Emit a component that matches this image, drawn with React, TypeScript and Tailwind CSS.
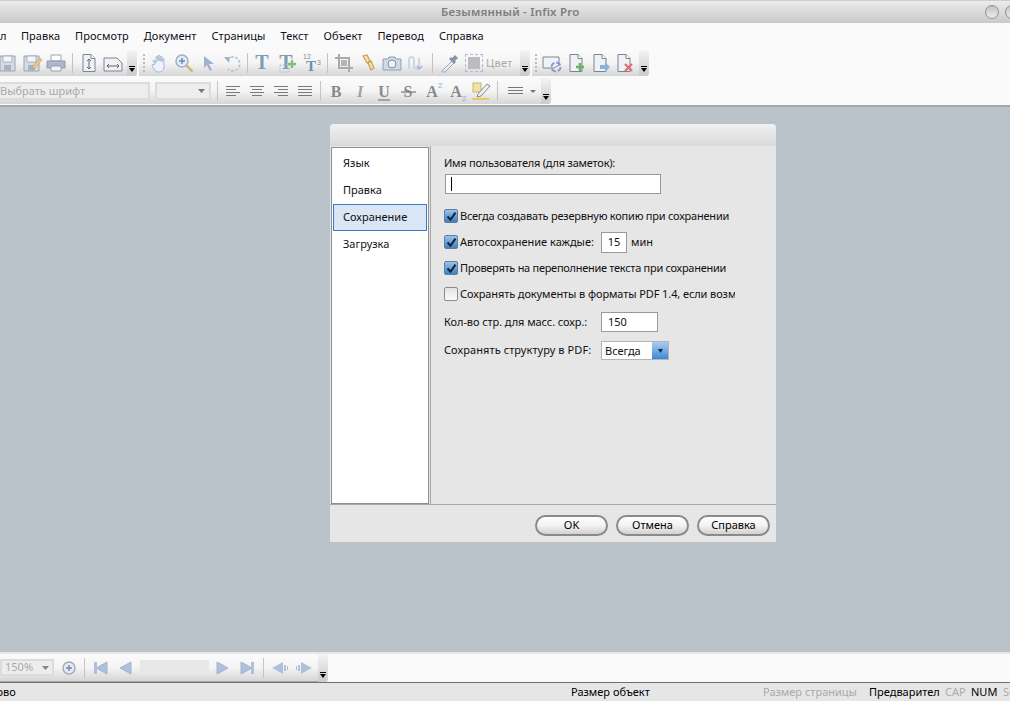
import type { ReactNode } from "react";

const font = { fontFamily: '"Noto Sans", "Liberation Sans", sans-serif' };

function Tb({ w = 24, children }: { w?: number; children?: ReactNode }) {
  return (
    <div className="flex h-full shrink-0 items-center justify-center" style={{ width: w }}>
      <svg width="22" height="22" viewBox="0 0 22 22" fill="none">
        {children}
      </svg>
    </div>
  );
}

function Sep({ wide }: { wide?: boolean }) {
  return <div className={`${wide ? "mx-[4px]" : "mx-[3px]"} h-[20px] w-px shrink-0 bg-[#c4c4c4]`} />;
}

function Dots() {
  return (
    <div className="flex w-[8px] shrink-0 flex-col items-center gap-[2px]">
      <i className="h-[2px] w-[2px] bg-[#bbb]" />
      <i className="h-[2px] w-[2px] bg-[#bbb]" />
      <i className="h-[2px] w-[2px] bg-[#bbb]" />
      <i className="h-[2px] w-[2px] bg-[#bbb]" />
      <i className="h-[2px] w-[2px] bg-[#bbb]" />
    </div>
  );
}

function Handle() {
  return (
    <div className="flex h-full w-[10px] shrink-0 flex-col items-center justify-end rounded-r-[3px] bg-gradient-to-b from-[#f4f4f4] to-[#cacaca] pb-[4px]">
      <i className="mb-[1px] h-[1px] w-[6px] bg-black" />
      <svg width="6" height="4" viewBox="0 0 6 4">
        <path d="M0 0h6L3 4z" fill="#000" />
      </svg>
    </div>
  );
}

const barBg = "bg-gradient-to-b from-[#fbfbfb] via-[#f4f4f4] to-[#d6d6d6]";

function Page({ children }: { children?: ReactNode }) {
  return (
    <>
      <path d="M5 2.5h8l4 4v13H5z" fill="#eef1f5" stroke="#7d8590" />
      <path d="M13 2.5v4h4" fill="#fff" stroke="#7d8590" />
      {children}
    </>
  );
}

function Floppy() {
  return (
    <>
      <path d="M3 4h15v15H3z" fill="#d5dbe6" stroke="#9aa3b3" />
      <path d="M6 4h9v6H6z" fill="#f6f6f6" stroke="#aab1bd" />
      <path d="M7 13h7v6H7z" fill="#a9b2c2" />
    </>
  );
}

function AlignLines({ kind }: { kind: "l" | "c" | "r" | "j" }) {
  const rows = [14, 10, 14, 10];
  return (
    <Tb>
      {rows.map((len, i) => {
        const w = kind === "j" ? 14 : len;
        const x = kind === "l" || kind === "j" ? 4 : kind === "c" ? 11 - w / 2 : 18 - w;
        return <rect key={i} x={x} y={6 + i * 3} width={w} height="1" fill="#7a7a7a" />;
      })}
    </Tb>
  );
}

function Letter({
  ch,
  color = "#85898e",
  size = 16,
  italic,
  extra,
}: {
  ch: string;
  color?: string;
  size?: number;
  italic?: boolean;
  extra?: ReactNode;
}) {
  return (
    <Tb>
      <text
        x="10"
        y="17"
        textAnchor="middle"
        fontSize={size}
        fontWeight="700"
        fontStyle={italic ? "italic" : "normal"}
        fill={color}
        fontFamily='"Liberation Serif", serif'
      >
        {ch}
      </text>
      {extra}
    </Tb>
  );
}

function Check({ on }: { on: boolean }) {
  return (
    <span
      className={`flex h-[14px] w-[14px] shrink-0 items-center justify-center rounded-[2px] border ${
        on ? "border-[#5b7fa6] bg-gradient-to-b from-[#9cc3ea] to-[#3f7fc0]" : "border-[#8c8c8c] bg-gradient-to-b from-[#e4e4e4] to-[#fafafa]"
      }`}
    >
      {on && (
        <svg width="11" height="11" viewBox="0 0 11 11">
          <path d="M1.5 5.5l3 3.2 5-7" fill="none" stroke="#10233c" strokeWidth="2" />
        </svg>
      )}
    </span>
  );
}

function Btn({ label }: { label: string }) {
  return (
    <div className="flex h-[21px] w-[73px] items-center justify-center rounded-full border-2 border-[#8a8a8a] bg-gradient-to-b from-[#ffffff] via-[#f2f2f2] to-[#d2d2d2] text-black">
      {label}
    </div>
  );
}

function Tri({ dir, bar }: { dir: "l" | "r"; bar?: boolean }) {
  return (
    <Tb>
      {dir === "l" ? <path d="M17 5v12L6 11z" fill="#b0c0dc" stroke="#a3b4d0" /> : <path d="M5 5v12l11-6z" fill="#b0c0dc" stroke="#a3b4d0" />}
      {bar && <rect x={dir === "l" ? 4 : 15} y="5" width="3" height="12" fill="#b0c0dc" />}
    </Tb>
  );
}

export default function App() {
  return (
    <div className="flex h-[701px] w-[1010px] flex-col overflow-hidden bg-[#bac2ca] text-[11px] text-[#111]" style={font}>
      {/* title */}
      <div className="flex h-[23px] shrink-0 items-center border-t border-[#cfcfcf] bg-gradient-to-b from-[#ececec] to-[#c9c9c9] pl-[441px]">
        <span className="text-[11.5px] font-semibold tracking-[0.2px] text-[#7e7e7e]">Безымянный - Infix Pro</span>
        <div className="ml-auto mr-[-9px] flex gap-[6px]">
          <i className="h-[14px] w-[14px] rounded-full border border-[#8f8f8f] bg-gradient-to-b from-[#c4c4c4] to-[#ececec]" />
          <i className="h-[14px] w-[14px] rounded-full border border-[#8f8f8f] bg-gradient-to-b from-[#c4c4c4] to-[#ececec]" />
        </div>
      </div>

      {/* menu */}
      <div className="flex h-[27px] shrink-0 items-center gap-[15px] bg-[#fafafa] tracking-[0.04px] text-[#101020]">
        <span className="ml-[-22px] w-[28px] whitespace-nowrap">Файл</span>
        <span>Правка</span>
        <span>Просмотр</span>
        <span>Документ</span>
        <span>Страницы</span>
        <span>Текст</span>
        <span>Объект</span>
        <span>Перевод</span>
        <span>Справка</span>
      </div>

      {/* toolbars */}
      <div className="flex h-[57px] shrink-0 flex-col gap-[2px] border-b-2 border-[#a6a6a6] bg-[#fafafa]">
        <div className="flex h-[26px] items-center">
          <div className={`ml-[-4px] flex h-full items-center pr-[2px] ${barBg}`}>
            <Tb><Floppy /></Tb>
            <Tb><Floppy /><path d="M12 14l7-8 2 2-7 8-3 1z" fill="#e8c98a" stroke="#b89a5f" strokeWidth=".6" /></Tb>
            <Tb>
              <path d="M6 3h10v6H6z" fill="#fff" stroke="#9aa3b3" />
              <path d="M2 9h18v7H2z" fill="#aeb8c8" stroke="#929cad" />
              <path d="M6 14h10v5H6z" fill="#f4f4f4" stroke="#9aa3b3" />
            </Tb>
            <Sep wide />
            <Tb><Page><path d="M11 7v10M9 9l2-2 2 2M9 15l2 2 2-2" stroke="#666" fill="none" /></Page></Tb>
            <Tb>
              <path d="M2 6h13l5 5v8H2z" fill="#eef1f5" stroke="#7d8590" />
              <path d="M5 14h12M7 12l-2 2 2 2M15 12l2 2-2 2" stroke="#666" fill="none" />
            </Tb>
          </div>
          <Handle />
          <div className={`ml-[2px] flex h-full items-center pl-[1px] ${barBg}`}>
            <Dots />
            <Tb>
              <path d="M6 12L4 9c0-1 1-1 2 0l1 2V5c0-1 2-1 2 0v4-5c0-1 2-1 2 0v5-4c0-1 2-1 2 0v5-3c0-1 2-1 2 0v8c0 3-2 5-5 5-4 0-5-3-7-7z" fill="#eef3fb" stroke="#9fb0ca" strokeWidth=".9" />
            </Tb>
            <Tb>
              <circle cx="9" cy="9" r="6" fill="#e6ecf5" stroke="#9fb0ca" strokeWidth="1.5" />
              <path d="M6 9h6M9 6v6" stroke="#7089b8" strokeWidth="1.5" />
              <path d="M13.5 13.5l6 6" stroke="#d3b67e" strokeWidth="2.5" />
            </Tb>
            <Tb><path d="M7 4l10 8h-5l3 6-2 1-3-6-3 3z" fill="#9db2cf" /></Tb>
            <Tb>
              <path d="M6 8a7 7 0 1 1 1 9" fill="none" stroke="#b6c2d5" strokeWidth="1.6" strokeDasharray="3 1.5" />
              <path d="M3 5l6 0-1 6z" fill="#9db2cf" />
            </Tb>
            <Sep />
            <Letter ch="T" color="#7f9db0" size={20} />
            <Letter
              ch="T"
              color="#7f9db0"
              size={20}
              extra={
                <>
                  <rect x="4" y="13" width="9" height="7" fill="none" stroke="#a9bbd3" strokeDasharray="1.5 1.5" />
                  <path d="M16 8v8M12 12h8" stroke="#7cc07a" strokeWidth="2.4" />
                </>
              }
            />
            <Tb>
              <text x="11" y="19" textAnchor="middle" fontSize="15" fontWeight="700" fill="#6f8eb4" fontFamily='"Liberation Serif", serif'>T</text>
              <text x="3" y="7" fontSize="7" fill="#888" fontFamily="sans-serif">12</text>
              <text x="17" y="13" fontSize="7" fill="#888" fontFamily="sans-serif">3</text>
            </Tb>
            <Sep wide />
            <Tb>
              <path d="M6 2v14h14M2 6h14v14" fill="none" stroke="#aaa" strokeWidth="2" />
              <rect x="8" y="8" width="6" height="6" fill="#b5b5b5" />
            </Tb>
            <Tb>
              <path d="M6 4l4-1 3 6-3 2zM11 11l3-2 3 7-3 2z" fill="#f5e0ae" stroke="#c4a05c" strokeWidth="1.2" />
            </Tb>
            <Tb>
              <path d="M2 7h5l1-2h6l1 2h5v11H2z" fill="#cfd9e8" stroke="#8f9fb5" />
              <circle cx="11" cy="12" r="4" fill="#eef1f6" stroke="#808c9d" />
            </Tb>
            <Tb>
              <path d="M4 17V8c0-4 5-4 5 0v6c0 4 5 4 5 0V6" fill="none" stroke="#ccd6e5" strokeWidth="2" />
              <path d="M12 14l2 3 3-3" fill="none" stroke="#9db2cf" strokeWidth="1.4" />
            </Tb>
            <Sep wide />
            <Tb w={26}>
              <path d="M4 18l9-9 2 2-9 9-3 0z" fill="#eaf0f8" stroke="#94a6bf" />
              <path d="M13 6l3-3 3 3-3 3 1 1-2 2-5-5 2-2z" fill="#8a94a3" />
            </Tb>
            <div className="ml-[2px] flex h-[18px] w-[18px] shrink-0 items-center justify-center border border-dashed border-[#a9bde0]">
              <i className="h-[12px] w-[12px] bg-[#bcbcbc]" />
            </div>
            <span className="ml-[3px] w-[34px] shrink-0 tracking-[0.3px] text-[#a9a9a9]">Цвет</span>
          </div>
          <Handle />
          <div className={`ml-[2px] flex h-full items-center pr-[3px] ${barBg}`}>
            <Dots />
            <Tb>
              <path d="M2 5h16v8l-5 3H2z" fill="#f0f3f7" stroke="#7d8590" />
              <circle cx="15" cy="15" r="4.5" fill="none" stroke="#8a95cf" strokeWidth="1.8" strokeDasharray="5 2" />
            </Tb>
            <Tb><Page><path d="M15 11v8M11 15h8" stroke="#68b368" strokeWidth="2.6" /></Page></Tb>
            <Tb><Page><path d="M11 13h5v-3l5 5-5 5v-3h-5z" fill="#8ab0da" /></Page></Tb>
            <Tb><Page><path d="M12 12l7 7M19 12l-7 7" stroke="#de6e70" strokeWidth="2.2" /></Page></Tb>
          </div>
          <Handle />
        </div>

        <div className="flex h-[26px] items-center">
          <div className={`flex h-full items-center ${barBg}`}>
            <div className="ml-[-8px] flex h-[18px] w-[158px] items-center border-2 border-[#dcdcdc] bg-[#ededed] pl-[6px] pt-[1px] text-[#a9a9a9]">
              Выбрать шрифт
            </div>
            <div className="ml-[5px] flex h-[18px] w-[56px] items-center justify-end border-2 border-[#dcdcdc] bg-[#ededed] pr-[4px]">
              <svg width="7" height="4" viewBox="0 0 7 4"><path d="M0 0h7L3.5 4z" fill="#777" /></svg>
            </div>
            <div className="ml-[3px]"><Sep /></div>
            <AlignLines kind="l" />
            <AlignLines kind="c" />
            <AlignLines kind="r" />
            <AlignLines kind="j" />
            <Sep />
            <div className="w-[1px] shrink-0" />
            <Letter ch="B" />
            <Letter ch="I" color="#a0a0a0" italic />
            <Letter ch="U" extra={<path d="M4 20h12" stroke="#85898e" strokeWidth="1.4" />} />
            <Letter ch="S" extra={<path d="M3 12h15" stroke="#85898e" strokeWidth="1.4" />} />
            <Letter ch="A" extra={<text x="16" y="8" fontSize="8" fill="#8aaee0" fontFamily="sans-serif">2</text>} />
            <Letter ch="A" extra={<text x="16" y="21" fontSize="8" fill="#8aaee0" fontFamily="sans-serif">2</text>} />
            <Tb>
              <rect x="3" y="3" width="8" height="9" fill="#f2e2a6" stroke="#c7b36a" />
              <path d="M8 14l9-10 3 2-9 10-4 1z" fill="#eef1f5" stroke="#888" />
              <rect x="2" y="18" width="17" height="2" fill="#f0c85a" />
            </Tb>
            <Sep wide />
            <div className="w-[2px] shrink-0" />
            <Tb>
              <rect x="3" y="7" width="15" height="1" fill="#777" />
              <rect x="3" y="10" width="15" height="1" fill="#777" />
              <rect x="3" y="13" width="15" height="1" fill="#777" />
            </Tb>
            <div className="flex w-[9px] shrink-0 items-center justify-center">
              <svg width="6" height="3" viewBox="0 0 6 3"><path d="M0 0h6L3 3z" fill="#777" /></svg>
            </div>
            <div className="w-[4px] shrink-0" />
          </div>
          <Handle />
        </div>
      </div>

      {/* workspace */}
      <div className="min-h-0 flex-1 pl-[330px] pt-[17px]">
        <div className="flex h-[418px] w-[446px] flex-col overflow-hidden rounded-t-[4px] bg-[#e6e6e6]">
          <div className="h-[22px] shrink-0 bg-gradient-to-b from-[#f1f1f1] to-[#d9d9d9]" />
          <div className="flex h-[359px] shrink-0 border-b border-[#a8a8a8]">
            <div className="ml-[1px] mt-[1px] w-[98px] shrink-0 border border-[#8f8f8f] bg-white p-[1px]">
              <div className="flex h-[28px] items-center pl-[10px] pt-[1px]">Язык</div>
              <div className="flex h-[27px] items-center pl-[10px]">Правка</div>
              <div className="flex h-[27px] items-center border border-[#3d79c4] bg-[#d9e6f6] pl-[9px]">Сохранение</div>
              <div className="flex h-[27px] items-center pl-[10px]">Загрузка</div>
            </div>
            <div className="ml-[1px] flex-1 border-l border-[#a8a8a8] pl-[13px]">
              <div className="flex h-[28px] items-end pb-[3px] tracking-[-0.22px]">Имя пользователя (для заметок):</div>
              <div className="ml-[1px] flex h-[20px] w-[216px] items-center border border-[#9a9a9a] bg-white pl-[5px]">
                <i className="h-[14px] w-px bg-black" />
              </div>
              <div className="mt-[9px]">
                <div className="flex h-[26px] items-center">
                  <Check on />
                  <span className="ml-[2px] w-[275px] overflow-hidden whitespace-nowrap tracking-[-0.22px]">Всегда создавать резервную копию при сохранении</span>
                </div>
                <div className="flex h-[26px] items-center">
                  <Check on />
                  <span className="ml-[2px] w-[141px] whitespace-nowrap">Автосохранение каждые:</span>
                  <div className="flex h-[21px] w-[26px] items-center justify-center border border-[#9a9a9a] bg-white">15</div>
                  <span className="ml-[4px]">мин</span>
                </div>
                <div className="flex h-[26px] items-center">
                  <Check on />
                  <span className="ml-[2px] w-[275px] overflow-hidden whitespace-nowrap tracking-[-0.28px]">Проверять на переполнение текста при сохранении</span>
                </div>
                <div className="flex h-[26px] items-center">
                  <Check on={false} />
                  <span className="ml-[2px] w-[275px] overflow-hidden whitespace-nowrap tracking-[-0.1px]">Сохранять документы в форматы PDF 1.4, если возможно</span>
                </div>
              </div>
              <div className="mt-[5px] flex h-[20px] items-center">
                <span className="w-[157px] whitespace-nowrap tracking-[-0.08px]">Кол-во стр. для масс. сохр.:</span>
                <div className="flex h-[20px] w-[57px] items-center border border-[#9a9a9a] bg-white pl-[6px]">150</div>
              </div>
              <div className="mt-[9px] flex h-[19px] items-center">
                <span className="w-[157px] whitespace-nowrap tracking-[0.08px]">Сохранять структуру в PDF:</span>
                <div className="flex h-[19px] w-[68px] items-stretch border border-[#b5b5b5] bg-white pl-[3px]">
                  <span className="flex-1 leading-[17px]">Всегда</span>
                  <span className="flex w-[16px] items-center justify-center bg-gradient-to-b from-[#a9cdf2] to-[#3f86d6]">
                    <svg width="5" height="4" viewBox="0 0 5 4"><path d="M0 0h5L2.5 4z" fill="#102a50" /></svg>
                  </span>
                </div>
              </div>
            </div>
          </div>
          <div className="flex flex-1 items-center justify-end gap-[8px] pr-[6px] pt-[3px]">
            <Btn label="OK" />
            <Btn label="Отмена" />
            <Btn label="Справка" />
          </div>
        </div>
      </div>

      {/* bottom nav */}
      <div className="flex h-[30px] shrink-0 items-stretch border-t-2 border-[#e8e8e8] bg-[#fafafa]">
        <div className={`flex items-center pr-[2px] ${barBg} border-b border-[#a6a6a6]`}>
          <div className="flex h-[17px] w-[54px] items-center justify-between border-2 border-[#dcdcdc] bg-[#ededed] pl-[3px] pr-[3px] text-[#a9a9a9]">
            <span>150%</span>
            <svg width="7" height="4" viewBox="0 0 7 4"><path d="M0 0h7L3.5 4z" fill="#888" /></svg>
          </div>
          <div className="ml-[3px]">
            <Tb>
              <circle cx="11" cy="11" r="6" fill="#e4e9f2" stroke="#a0aabb" strokeWidth="1.4" />
              <path d="M8 11h6M11 8v6" stroke="#7186b3" strokeWidth="1.4" />
            </Tb>
          </div>
          <Sep />
          <div className="w-[1px] shrink-0" />
          <Tri dir="l" bar />
          <Tri dir="l" />
          <div className="ml-[3px] h-[15px] w-[69px] shrink-0 bg-[#e8e8e8]" />
          <div className="w-[2px] shrink-0" />
          <Tri dir="r" />
          <Tri dir="r" bar />
          <Sep wide />
          <Tb>
            <path d="M14 5v12L3 11z" fill="#b0c0dc" />
            <path d="M15 8h2v6h-2zM18 9h1v4h-1z" fill="#b0c0dc" />
          </Tb>
          <Tb>
            <path d="M8 5v12l11-6z" fill="#b0c0dc" />
            <path d="M5 8h2v6H5zM3 9h1v4H3z" fill="#b0c0dc" />
          </Tb>
        </div>
        <Handle />
      </div>

      {/* status */}
      <div className="flex h-[19px] shrink-0 items-center overflow-hidden border-t border-[#707070] bg-[#e6e6e6] text-black">
        <span className="ml-[-20px] w-[571px] shrink-0 whitespace-nowrap">Готово</span>
        <span className="ml-[20px] w-[192px] shrink-0 whitespace-nowrap">Размер объект</span>
        <span className="w-[106px] shrink-0 whitespace-nowrap text-[#aaa]">Размер страницы</span>
        <span className="w-[76px] shrink-0 whitespace-nowrap">Предварител</span>
        <span className="w-[26px] shrink-0 text-[#aaa]">CAP</span>
        <span className="w-[32px] shrink-0">NUM</span>
        <span className="shrink-0 text-[#aaa]">SCRL</span>
      </div>
    </div>
  );
}
